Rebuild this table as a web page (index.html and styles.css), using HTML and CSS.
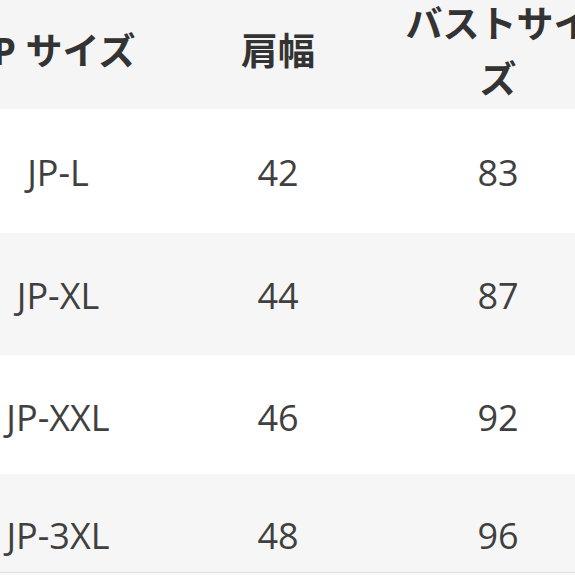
FILE: index.html
```html
<!DOCTYPE html>
<html lang="ja">
<head>
<meta charset="utf-8">
<link rel="stylesheet" href="styles.css">
</head>
<body>
<div class="table">
  <div class="row head">
    <div class="cell">JP サイズ</div>
    <div class="cell">肩幅</div>
    <div class="cell">バストサイズ</div>
  </div>
  <div class="row r1">
    <div class="cell">JP-L</div>
    <div class="cell">42</div>
    <div class="cell">83</div>
  </div>
  <div class="row r2 alt">
    <div class="cell">JP-XL</div>
    <div class="cell">44</div>
    <div class="cell">87</div>
  </div>
  <div class="row r3">
    <div class="cell">JP-XXL</div>
    <div class="cell">46</div>
    <div class="cell">92</div>
  </div>
  <div class="row r4 alt">
    <div class="cell">JP-3XL</div>
    <div class="cell">48</div>
    <div class="cell">96</div>
  </div>
</div>
</body>
</html>
```

FILE: styles.css
```css
html, body {
  margin: 0;
  padding: 0;
  overflow: hidden;
  background: #fafafa;
}
body {
  width: 575px;
  height: 575px;
  font-family: "Open Sans", "Noto Sans CJK JP", sans-serif;
}
.table {
  margin-left: -52px;
  width: 660px;
  display: flex;
  flex-direction: column;
}
.row {
  display: flex;
  background: #ffffff;
  color: #404040;
  font-size: 36px;
  line-height: 50px;
  align-items: flex-start;
}
.cell {
  flex: none;
  width: 220px;
  box-sizing: border-box;
  padding: 38px 12px 0;
  text-align: center;
}
.head {
  background: #f5f5f5;
  color: #333333;
  font-weight: 700;
  font-size: 37px;
  height: 109px;
  line-height: 55px;
  align-items: center;
}
.head .cell {
  padding: 0 12px 8px;
}
.alt {
  background: #f6f6f6;
}
.r1 { height: 124px; }
.r1 .cell { padding-top: 39px; }
.r2 { height: 122px; }
.r3 { height: 119px; }
.r4 {
  height: 98px;
  border-bottom: 1px solid #dddddd;
}
.r4 .cell { padding-top: 37px; }
```
